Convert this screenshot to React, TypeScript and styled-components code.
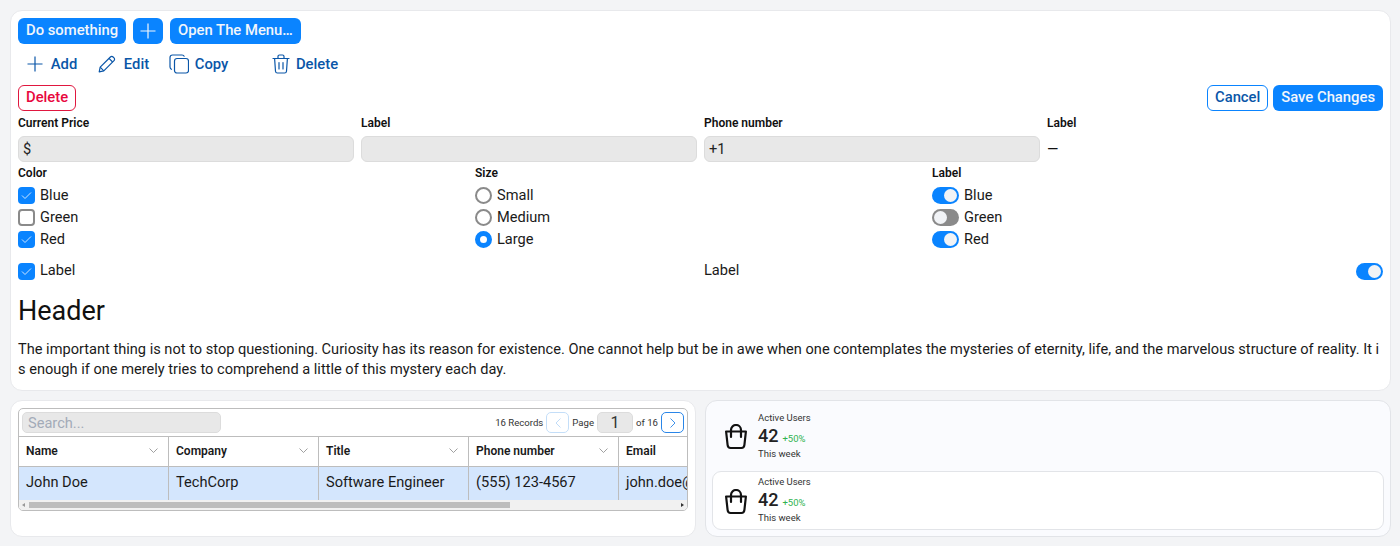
import styled, { createGlobalStyle } from 'styled-components'

const GlobalStyle = createGlobalStyle`
  html, body {
    margin: 0;
    background: #f3f4f6;
    font-family: Roboto, "Liberation Sans", sans-serif;
    color: #111;
  }
  * { box-sizing: border-box; }
`
const Page = styled.div`
  display: flex;
  flex-direction: column;
  gap: 9px;
  padding: 10px 9px 9px 10px;
  height: 546px;
  overflow: hidden;
`
const Card = styled.section`
  background: #fff;
  border: 1px solid #e8e9ec;
  border-radius: 12px;
  padding: 7px;
`
const TopCard = styled(Card)`
  height: 382px;
`
const Row = styled.div`
  display: flex;
  align-items: center;
  gap: 7px;
`
const ActionRow = styled(Row)`
  margin-top: 7px;
  gap: 0;
  height: 26px;
`
const SplitRow = styled(Row)`
  justify-content: space-between;
  margin-top: 8px;
`
const RightGroup = styled.div`
  display: flex;
  gap: 5px;
`
const SolidButton = styled.button`
  height: 26px;
  padding: 0 8px 2px;
  border: none;
  border-radius: 6px;
  background: #0a84ff;
  color: #f2f6fb;
  font: 500 14.8px Roboto, sans-serif;
  display: flex;
  align-items: center;
`
const IconButton = styled(SolidButton)`
  width: 30px;
  justify-content: center;
  padding: 0;
`
const OutlineButton = styled(SolidButton)<{ $danger?: boolean }>`
  background: #fff;
  border: 1px solid ${p => (p.$danger ? '#e0173f' : '#0a84ff')};
  color: ${p => (p.$danger ? '#e8083e' : '#0a56a8')};
  padding: 0 7px 2px;
`
const GhostButton = styled.button<{ $width: number; $gap: number }>`
  width: ${p => p.$width}px;
  height: 26px;
  padding: 0;
  border: none;
  background: none;
  color: #0a56a8;
  font: 500 14.8px Roboto, sans-serif;
  display: flex;
  align-items: center;
  justify-content: center;
  gap: ${p => p.$gap}px;
`
const FieldGrid = styled.div`
  display: grid;
  grid-template-columns: repeat(4, 1fr);
  gap: 7px;
  margin-top: 4px;
`
const Field = styled.div`
  display: flex;
  flex-direction: column;
`
const FieldLabel = styled.label`
  font-size: 12px;
  font-weight: 600;
  line-height: 16px;
  height: 21px;
  color: #111;
`
const FieldBox = styled.div`
  height: 26px;
  background: #e8e8e8;
  border: 1px solid #dcdcdc;
  border-radius: 6px;
  padding: 0 4px;
  font-size: 14.6px;
  display: flex;
  align-items: center;
  color: #222;
`
const Dash = styled.div`
  height: 26px;
  font-size: 14.6px;
  display: flex;
  align-items: center;
`
const ChoiceGrid = styled.div`
  display: grid;
  grid-template-columns: repeat(3, 450px);
  gap: 7px;
  margin-top: 5px;
`
const ChoiceLabel = styled(FieldLabel)`
  display: block;
  line-height: 12px;
  height: 17.5px;
`
const ChoiceRow = styled.div<{ $height?: number }>`
  height: ${p => p.$height ?? 22}px;
  display: flex;
  align-items: center;
  gap: 5px;
  font-size: 14.6px;
  color: #1a1a1a;
`
const RowText = styled.span<{ $lift?: number }>`
  line-height: 13px;
  margin-bottom: ${p => p.$lift ?? 1}px;
`
const Check = styled.span<{ $on?: boolean }>`
  width: 17px;
  height: 17px;
  border-radius: 4px;
  background: ${p => (p.$on ? '#0a84ff' : '#fff')};
  border: ${p => (p.$on ? 'none' : '2px solid #8a8a8a')};
  display: flex;
  align-items: center;
  justify-content: center;
`
const Radio = styled.span<{ $on?: boolean }>`
  width: 17px;
  height: 17px;
  border-radius: 50%;
  background: #fff;
  border: ${p => (p.$on ? '5px solid #0a84ff' : '2px solid #8a8a8a')};
`
const Toggle = styled.span<{ $on?: boolean }>`
  width: 27px;
  height: 17px;
  padding: 2px;
  border-radius: 9px;
  background: ${p => (p.$on ? '#0a84ff' : '#8a8a8a')};
  display: flex;
  justify-content: ${p => (p.$on ? 'flex-end' : 'flex-start')};
  &::after {
    content: '';
    width: 13px;
    height: 13px;
    border-radius: 50%;
    background: #f1f3f6;
  }
`
const LabelRow = styled.div`
  display: grid;
  grid-template-columns: 686px 1fr auto;
  align-items: center;
  height: 17px;
  margin-top: 12.5px;
  font-size: 14.6px;
  color: #1a1a1a;
`
const Header = styled.h1`
  margin: 15px 0 0;
  font-size: 27px;
  font-weight: 400;
  line-height: 32px;
  color: #111;
`
const Paragraph = styled.p`
  margin: 12px 0 0;
  font-size: 14.6px;
  line-height: 20px;
  word-break: break-all;
  color: #1a1a1a;
`
const BottomRow = styled.div`
  display: grid;
  grid-template-columns: 686px 686px;
  gap: 9px;
`
const TableCard = styled(Card)`
  height: 137px;
`
const TableBox = styled.div`
  border: 1px solid #bdbdbd;
  border-radius: 5px;
  height: 103px;
  overflow: hidden;
`
const TableTools = styled.div`
  height: 28px;
  display: flex;
  align-items: center;
  padding: 0 0 0 3px;
  font-size: 9.6px;
  color: #333;
  border-bottom: 1px solid #bdbdbd;
`
const Search = styled.div`
  width: 199px;
  height: 21px;
  margin-right: auto;
  background: #e8e8e8;
  border: 1px solid #dcdcdc;
  border-radius: 5px;
  padding: 0 5px;
  font-size: 14.6px;
  color: #a3abb8;
  display: flex;
  align-items: center;
`
const PageButton = styled.span<{ $on?: boolean }>`
  width: 23px;
  height: 21px;
  margin: 0 3px;
  border-radius: 5px;
  border: 1px solid ${p => (p.$on ? '#2a86e8' : '#c4def8')};
  display: flex;
  align-items: center;
  justify-content: center;
`
const PageBox = styled.span`
  width: 36px;
  height: 21px;
  margin: 0 3px;
  background: #e8e8e8;
  border: 1px solid #dcdcdc;
  border-radius: 5px;
  font-size: 16px;
  display: flex;
  align-items: center;
  justify-content: center;
`
const TableRow = styled.div<{ $head?: boolean }>`
  display: flex;
  height: ${p => (p.$head ? 30 : 33)}px;
  background: ${p => (p.$head ? '#fff' : '#d4e6fd')};
  border-bottom: ${p => (p.$head ? '1px solid #bdbdbd' : 'none')};
  font-size: ${p => (p.$head ? 12 : 14.6)}px;
  font-weight: ${p => (p.$head ? 600 : 400)};
  overflow: hidden;
`
const Cell = styled.div<{ $last?: boolean; $head?: boolean }>`
  flex: 0 0 150px;
  padding: 0 10px ${p => (p.$head ? 2 : 4)}px 7px;
  display: flex;
  align-items: center;
  justify-content: space-between;
  white-space: nowrap;
  overflow: hidden;
  border-right: ${p => (p.$last ? 'none' : '1px solid #bdbdbd')};
  color: #1a1a1a;
`
const ScrollTrack = styled.div`
  height: 10px;
  background: #f1f1f1;
  display: flex;
  align-items: center;
  justify-content: space-between;
  padding: 0 3px;
`
const ScrollThumb = styled.div`
  position: absolute;
  left: 10px;
  top: 2px;
  width: 481px;
  height: 6px;
  background: #bdbdbd;
`
const ScrollArea = styled(ScrollTrack)`
  position: relative;
`
const Arrow = styled.span<{ $right?: boolean }>`
  width: 0;
  height: 0;
  border-top: 2px solid transparent;
  border-bottom: 2px solid transparent;
  ${p => (p.$right ? 'border-left: 3px solid #333;' : 'border-right: 3px solid #999;')}
`
const StatCard = styled(Card)`
  background: #fafbfe;
  border-color: #e2e4e8;
  height: 137px;
  padding: 6px;
`
const Stat = styled.div<{ $boxed?: boolean }>`
  height: ${p => (p.$boxed ? 59 : 60)}px;
  margin-top: ${p => (p.$boxed ? 4 : 0)}px;
  padding: ${p => (p.$boxed ? 2 : 0)}px 0 0 12px;
  display: flex;
  align-items: center;
  gap: 11px;
  border-radius: 9px;
  background: ${p => (p.$boxed ? '#fff' : 'transparent')};
  border: 1px solid ${p => (p.$boxed ? '#e2e4e8' : 'transparent')};
`
const StatText = styled.div`
  display: flex;
  flex-direction: column;
  padding-bottom: 3px;
  font-size: 9.5px;
  line-height: 12px;
  color: #333;
`
const StatValue = styled.div`
  display: flex;
  align-items: baseline;
  gap: 4px;
  margin-bottom: -3px;
  font-size: 18px;
  font-weight: 500;
  line-height: 24px;
  color: #222;
`
const Delta = styled.span`
  font-size: 9.5px;
  font-weight: 400;
  color: #2fb350;
`

const PlusIcon = ({ color = '#f2f6fb' }) => (
  <svg width="16" height="16" viewBox="0 0 16 16" fill="none" stroke={color} strokeWidth="1.2">
    <path d="M8 .5v15M.5 8h15" />
  </svg>
)
const PencilIcon = () => (
  <svg width="18" height="18" viewBox="0 0 18 18" fill="none" stroke="#0a56a8" strokeWidth="1.2" strokeLinejoin="round">
    <path d="M1.2 16.8l1-4.6L12.4 2a1.9 1.9 0 0 1 2.7 0l.9.9a1.9 1.9 0 0 1 0 2.7L5.8 15.8z" />
    <path d="M2.2 12.2l3.6 3.6M11 3.4l3.6 3.6" />
  </svg>
)
const CopyIcon = () => (
  <svg width="20" height="20" viewBox="0 0 20 20" fill="none" stroke="#0a56a8" strokeWidth="1.2">
    <rect x="5.500" y="4.500" width="14" height="14.500" rx="2.500" />
    <path d="M3 15.500c-1.200-.3-2-1.200-2-2.500V3.500C1 2 2 1 3.500 1H13c1.200 0 2 .6 2.400 1.600" />
  </svg>
)
const TrashIcon = () => (
  <svg width="18" height="20" viewBox="0 0 18 20" fill="none" stroke="#0a56a8" strokeWidth="1.2" strokeLinecap="round">
    <path d="M1 4.500h16M6 4.500V2.500C6 1.600 6.600 1 7.500 1h3c.9 0 1.500.6 1.500 1.500v2" />
    <path d="M2.600 4.500l.9 12.700c.1 1 .8 1.800 1.900 1.800h7.200c1.100 0 1.800-.8 1.900-1.800l.9-12.700" />
    <path d="M7 8.500v6.500M11 8.500v6.500" />
  </svg>
)
const CheckMark = () => (
  <svg width="11" height="9" viewBox="0 0 11 9" fill="none" stroke="#cfe6ff" strokeWidth="1">
    <path d="M1 4.500l3 3 6-6" />
  </svg>
)
const SortChevron = () => (
  <svg width="9" height="5" viewBox="0 0 9 5" fill="none" stroke="#888" strokeWidth="0.8">
    <path d="M.5.500l4 4 4-4" />
  </svg>
)
const PageChevron = ({ dir, color }: { dir: 'left' | 'right'; color: string }) => (
  <svg width="6" height="10" viewBox="0 0 6 10" fill="none" stroke={color} strokeWidth="0.9">
    <path d={dir === 'left' ? 'M5.500.500L1 5l4.500 4.500' : 'M.5.500L5 5 .5 9.500'} />
  </svg>
)
const BagIcon = () => (
  <svg width="22" height="26" viewBox="0 0 22 26" fill="none" stroke="#111" strokeWidth="2.200" strokeLinejoin="round" strokeLinecap="round">
    <path d="M1.100 7.500h19.800l-1.500 13.500c-.2 1.800-1.300 3-3 3H5.600c-1.700 0-2.800-1.200-3-3z" />
    <path d="M6 13V6a5 5 0 0 1 10 0v7" />
  </svg>
)

const columns = ['Name', 'Company', 'Title', 'Phone number', 'Email']
const values = ['John Doe', 'TechCorp', 'Software Engineer', '(555) 123-4567', 'john.doe@']

const StatBlock = ({ boxed }: { boxed?: boolean }) => (
  <Stat $boxed={boxed}>
    <BagIcon />
    <StatText>
      <span>Active Users</span>
      <StatValue>42<Delta>+50%</Delta></StatValue>
      <span>This week</span>
    </StatText>
  </Stat>
)

export default function App() {
  return (
    <>
      <GlobalStyle />
      <Page>
        <TopCard>
          <Row>
            <SolidButton>Do something</SolidButton>
            <IconButton><PlusIcon /></IconButton>
            <SolidButton>Open The Menu…</SolidButton>
          </Row>
          <ActionRow>
            <GhostButton $width={68} $gap={8}><PlusIcon color="#0a56a8" />Add</GhostButton>
            <GhostButton $width={75} $gap={8}><PencilIcon />Edit</GhostButton>
            <GhostButton $width={75} $gap={6}><CopyIcon />Copy</GhostButton>
            <GhostButton $width={138} $gap={6}><TrashIcon />Delete</GhostButton>
          </ActionRow>
          <SplitRow>
            <OutlineButton $danger>Delete</OutlineButton>
            <RightGroup>
              <OutlineButton>Cancel</OutlineButton>
              <SolidButton>Save Changes</SolidButton>
            </RightGroup>
          </SplitRow>
          <FieldGrid>
            <Field><FieldLabel>Current Price</FieldLabel><FieldBox>$</FieldBox></Field>
            <Field><FieldLabel>Label</FieldLabel><FieldBox /></Field>
            <Field><FieldLabel>Phone number</FieldLabel><FieldBox>+1</FieldBox></Field>
            <Field><FieldLabel>Label</FieldLabel><Dash>—</Dash></Field>
          </FieldGrid>
          <ChoiceGrid>
            <Field>
              <ChoiceLabel>Color</ChoiceLabel>
              <ChoiceRow><Check $on><CheckMark /></Check><RowText>Blue</RowText></ChoiceRow>
              <ChoiceRow><Check /><RowText>Green</RowText></ChoiceRow>
              <ChoiceRow><Check $on><CheckMark /></Check><RowText>Red</RowText></ChoiceRow>
            </Field>
            <Field>
              <ChoiceLabel>Size</ChoiceLabel>
              <ChoiceRow><Radio /><RowText>Small</RowText></ChoiceRow>
              <ChoiceRow><Radio /><RowText>Medium</RowText></ChoiceRow>
              <ChoiceRow><Radio $on /><RowText>Large</RowText></ChoiceRow>
            </Field>
            <Field>
              <ChoiceLabel>Label</ChoiceLabel>
              <ChoiceRow><Toggle $on /><RowText>Blue</RowText></ChoiceRow>
              <ChoiceRow><Toggle /><RowText>Green</RowText></ChoiceRow>
              <ChoiceRow><Toggle $on /><RowText>Red</RowText></ChoiceRow>
            </Field>
          </ChoiceGrid>
          <LabelRow>
            <ChoiceRow $height={17}><Check $on><CheckMark /></Check><RowText $lift={3}>Label</RowText></ChoiceRow>
            <RowText $lift={3}>Label</RowText>
            <Toggle $on />
          </LabelRow>
          <Header>Header</Header>
          <Paragraph>
            The important thing is not to stop questioning. Curiosity has its reason for existence. One cannot help but be in awe when one contemplates the mysteries of eternity, life, and the marvelous structure of reality. It is enough if one merely tries to comprehend a little of this mystery each day.
          </Paragraph>
        </TopCard>
        <BottomRow>
          <TableCard>
            <TableBox>
              <TableTools>
                <Search>Search...</Search>
                <span>16 Records</span>
                <PageButton><PageChevron dir="left" color="#b9d8f7" /></PageButton>
                <span>Page</span>
                <PageBox>1</PageBox>
                <span>of 16</span>
                <PageButton $on><PageChevron dir="right" color="#2a86e8" /></PageButton>
              </TableTools>
              <TableRow $head>
                {columns.map((c, i) => (
                  <Cell key={c} $head $last={i === 4}>{c}{i < 4 && <SortChevron />}</Cell>
                ))}
              </TableRow>
              <TableRow>
                {values.map((v, i) => (
                  <Cell key={v} $last={i === 4}>{v}</Cell>
                ))}
              </TableRow>
              <ScrollArea>
                <Arrow />
                <ScrollThumb />
                <Arrow $right />
              </ScrollArea>
            </TableBox>
          </TableCard>
          <StatCard>
            <StatBlock />
            <StatBlock boxed />
          </StatCard>
        </BottomRow>
      </Page>
    </>
  )
}
